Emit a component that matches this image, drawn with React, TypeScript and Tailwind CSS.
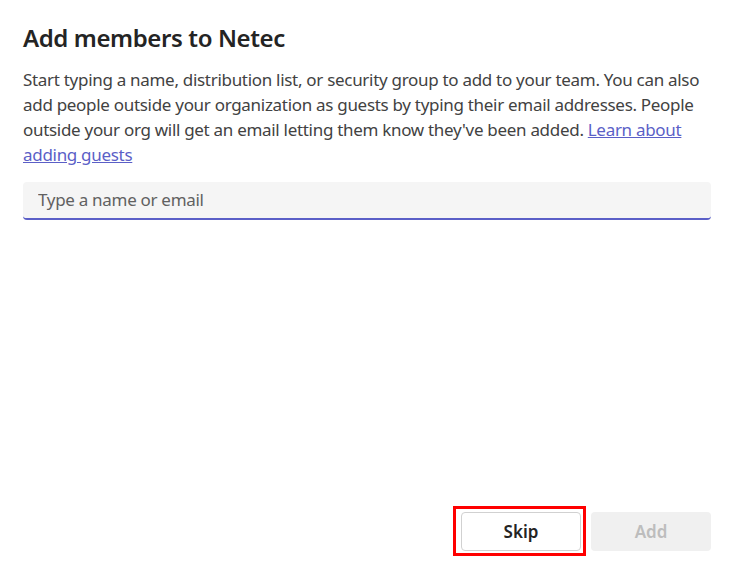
const font = { fontFamily: '"Segoe UI", "Noto Sans", "Open Sans", sans-serif' };

const AddMembers = () => {
  return (
    <div
      className="flex flex-col h-screen w-full bg-white px-[23px] pt-[22px] pb-[23px] text-[#242424]"
      style={font}
    >
      <h1 className="text-[24px] leading-[32px] font-semibold tracking-[-0.4px]">
        Add members to Netec
      </h1>
      <p className="mt-[13px] text-[17px] leading-[25px] tracking-[-0.3px] text-[#424242]">
        Start typing a name, distribution list, or security group to add to
        your team. You can also
        <br />
        add people outside your organization as guests by typing their email
        addresses. People
        <br />
        outside your org will get an email letting them know they've been
        added.{' '}
        <a href="#" className="text-[#5b5fc7] underline">
          Learn about
          <br />
          adding guests
        </a>
      </p>

      <div className="mt-[15px] h-[38px] rounded-[4px] bg-[#f5f5f5] border-b-2 border-[#5b5fc7] flex items-center px-[15px]">
        <input
          className="w-full bg-transparent outline-none text-[17px] tracking-[-0.3px] placeholder:text-[#616161]"
          placeholder="Type a name or email"
          type="text"
        />
      </div>

      <div className="flex-1" />

      {/* ---------------- buttons ---------------- */}
      <div className="flex justify-end gap-[10px]">
        <button className="relative w-[120px] h-[39px] rounded-[4px] border border-[#d1d1d1] bg-white text-[17px] font-semibold text-[#242424]">
          Skip
          <span className="absolute -left-[9px] -top-[7px] -right-[6px] -bottom-[6px] border-[3px] border-[#f00]" />
        </button>
        <button className="w-[120px] h-[39px] rounded-[4px] bg-[#f0f0f0] text-[17px] font-semibold text-[#bdbdbd]">
          Add
        </button>
      </div>
    </div>
  );
};

export default function App() {
  return <AddMembers />;
}
